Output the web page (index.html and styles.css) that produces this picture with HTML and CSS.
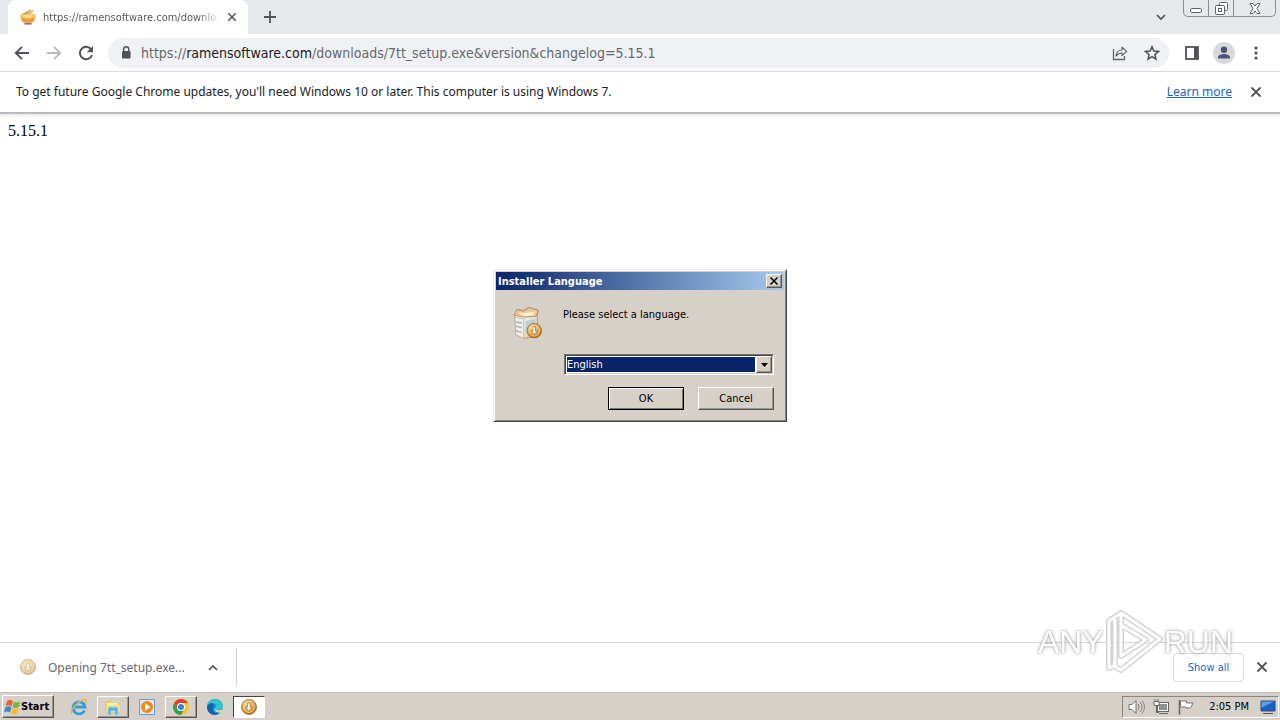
FILE: index.html
```html
<!DOCTYPE html>
<html lang="en">
<head>
<meta charset="utf-8">
<title>Installer Language</title>
<link rel="stylesheet" href="styles.css">
</head>
<body>
<svg class="defs" aria-hidden="true">
  <defs>
    <radialGradient id="gold" cx=".4" cy=".3" r=".8"><stop offset="0" stop-color="#ffe9b0"/><stop offset=".55" stop-color="#dca347"/><stop offset="1" stop-color="#a8691c"/></radialGradient>
    <linearGradient id="edge" x1="0" y1="0" x2="1" y2="1"><stop offset="0" stop-color="#0c59a4"/><stop offset=".6" stop-color="#1b9de2"/><stop offset="1" stop-color="#5bd36b"/></linearGradient>
    <linearGradient id="box" x1="0" y1="0" x2="1" y2="1"><stop offset="0" stop-color="#fff"/><stop offset=".5" stop-color="#e4e6e4"/><stop offset="1" stop-color="#e3b576"/></linearGradient>
    <symbol id="coin" viewBox="0 0 16 16"><circle cx="8" cy="8" r="7.5" fill="url(#gold)" stroke="#8a5a1a" stroke-width=".7"/><circle cx="8" cy="8" r="5.3" fill="none" stroke="#f6d793" stroke-width=".8"/><path d="M6.7 3.8h2.6v4.4h2L8 12.2 4.7 8.2h2z" fill="#fff" stroke="#98641f" stroke-width=".7"/></symbol>
    <symbol id="cross" viewBox="0 0 12 12"><path d="M1.5 1.5l9 9M10.5 1.5l-9 9" fill="none" stroke="currentColor" stroke-width="1.8"/></symbol>
  </defs>
</svg>
<div class="screen">
  <header class="tabs">
    <div class="tab">
      <svg class="i16" viewBox="0 0 16 16"><path d="M2 6L11 .8M4 6l9-4" stroke="#c88c55" stroke-width="1.1"/><ellipse cx="8" cy="7" rx="7.6" ry="2.8" fill="#f2a13b"/><path d="M.5 7h15c0 4-2 6-4 7.5h-7C2 13 .5 11 .5 7z" fill="#f5ac48"/><ellipse cx="8" cy="7" rx="6" ry="1.7" fill="#ffe08a"/><path d="M2 10.5q6 3 12 0" stroke="#e28a35" fill="none"/><path d="M4.5 14.8h7" stroke="#8a7090" stroke-width="1.6"/></svg>
      <span class="tab-title">https://ramensoftware.com/downloads</span>
      <button class="flat" aria-label="Close tab"><svg class="i10"><use href="#cross"/></svg></button>
    </div>
    <button class="flat new-tab" aria-label="New tab"><svg class="i12" viewBox="0 0 12 12"><path d="M6 0v12M0 6h12" stroke="#505357" stroke-width="1.8"/></svg></button>
    <div class="win-area">
      <button class="flat chevron" aria-label="Search tabs"><svg width="10" height="7" viewBox="0 0 10 7"><path d="M1 1l4 4 4-4" fill="none" stroke="#505357" stroke-width="1.7"/></svg></button>
      <div class="win">
        <button aria-label="Minimize"><svg width="12" height="12" viewBox="0 0 12 12"><rect x=".5" y="6.5" width="11" height="4" rx="1.2" fill="#fff" stroke="#5c6066"/></svg></button>
        <button aria-label="Restore"><svg width="13" height="13" viewBox="0 0 13 13"><rect x="4.5" y=".5" width="8" height="8" rx="1" fill="#fff" stroke="#5c6066"/><rect x=".5" y="3.5" width="9" height="9" rx="1" fill="#fff" stroke="#5c6066"/><rect x="3.5" y="6.5" width="3" height="3" fill="#fff" stroke="#5c6066"/></svg></button>
        <button class="win-close" aria-label="Close"><svg width="12" height="11" viewBox="0 0 12 11"><path d="M1 .5h3l2 2.6L8 .5h3L8 5.5l3 5H8L6 7.9l-2 2.6H1l3-5z" fill="#fff" stroke="#5c6066"/></svg></button>
      </div>
    </div>
  </header>
  <nav class="toolbar">
    <button class="flat" aria-label="Back"><svg class="i16" viewBox="0 0 16 16"><path d="M15 8H2M8 1.8L1.8 8 8 14.2" fill="none" stroke="#505357" stroke-width="1.9"/></svg></button>
    <button class="flat" aria-label="Forward"><svg class="i16" viewBox="0 0 16 16"><path d="M1 8h13M8 1.8L14.2 8 8 14.2" fill="none" stroke="#b8babd" stroke-width="1.9"/></svg></button>
    <button class="flat" aria-label="Reload"><svg class="i16" viewBox="0 0 16 16"><path d="M13.2 4.5A6.2 6.2 0 1 0 14 10" fill="none" stroke="#505357" stroke-width="2"/><path d="M15 1v6.2H8.8z" fill="#505357"/></svg></button>
    <div class="address">
      <svg width="10" height="13" viewBox="0 0 10 13"><rect x="1" y="5" width="8.6" height="7.5" rx="1" fill="#505357"/><path d="M2.7 5V3.2a2.5 2.5 0 0 1 5 0V5" fill="none" stroke="#505357" stroke-width="1.4"/></svg>
      <div class="url" role="textbox" aria-label="Address">https://<b>ramensoftware.com</b>/downloads/7tt_setup.exe&amp;version&amp;changelog=5.15.1</div>
      <button class="flat" aria-label="Share"><svg class="i16" viewBox="0 0 16 16"><path d="M1.5 4v10.5h11V11" fill="none" stroke="#62666b" stroke-width="1.3"/><path d="M4 11c.5-4 2.5-6 6-6V2.2l4.7 4.2L10 10.5V8C7 8 5.500 9 4 11z" fill="none" stroke="#62666b" stroke-width="1.2" stroke-linejoin="round"/></svg></button>
      <button class="flat" aria-label="Bookmark"><svg class="i16" viewBox="0 0 16 16"><path d="M8 1.800l1.800 4.300 4.700.4-3.600 3.100 1.100 4.600L8 11.700l-4 2.500 1.100-4.600-3.600-3.100 4.700-.4z" fill="none" stroke="#505357" stroke-width="1.5"/></svg></button>
    </div>
    <div class="tools">
      <button class="flat" aria-label="Side panel"><svg class="i14" viewBox="0 0 14 14"><rect x="1" y="1" width="12" height="12" fill="none" stroke="#505357" stroke-width="1.800"/><path d="M9 1h4v12H9z" fill="#505357"/></svg></button>
      <button class="flat" aria-label="Profile"><svg width="22" height="22" viewBox="0 0 22 22"><circle cx="11" cy="11" r="11" fill="#d6dade"/><circle cx="11" cy="7.800" r="3.200" fill="#485574"/><path d="M5 16.500v-1.300c0-2 3.800-3.100 6-3.100s6 1.100 6 3.100v1.300z" fill="#485574"/></svg></button>
      <button class="flat menu" aria-label="Menu"><svg width="4" height="14" viewBox="0 0 4 14"><g fill="#505357"><circle cx="2" cy="2" r="1.600"/><circle cx="2" cy="7" r="1.600"/><circle cx="2" cy="12" r="1.600"/></g></svg></button>
    </div>
  </nav>
  <div class="notice">
    <span>To get future Google Chrome updates, you'll need Windows 10 or later. This computer is using Windows 7.</span>
    <a href="#">Learn more</a>
    <button class="flat" aria-label="Dismiss"><svg class="i12"><use href="#cross"/></svg></button>
  </div>
  <main class="page">5.15.1</main>
  <div class="shelf">
    <button class="download"><svg class="i16 faded"><use href="#coin"/></svg><span>Opening 7tt_setup.exe...</span></button>
    <button class="flat more" aria-label="Download options"><svg width="10" height="7" viewBox="0 0 10 7"><path d="M1 6l4-4 4 4" fill="none" stroke="#505357" stroke-width="1.700"/></svg></button>
    <div class="rule"></div>
    <button class="show-all">Show all</button>
    <button class="flat" aria-label="Close downloads"><svg class="i12"><use href="#cross"/></svg></button>
  </div>
  <footer class="taskbar">
    <button class="start"><svg width="17" height="16" viewBox="0 0 17 16"><path d="M3 2q3-2 6 0L7.700 7.200q-3-2-6 0z" fill="#e9612c"/><path d="M10 2.500q3 2 6.500 0L15 8q-3 2-6.300 0z" fill="#76b83f"/><path d="M1.500 8.200q3-2 6 0L6 13.400q-3-2-6 0z" fill="#3d82d4"/><path d="M8.400 9q3 2 6.300 0l-1.500 5.300q-3 2-6.300 0z" fill="#f4bd2b"/></svg><span>Start</span></button>
    <div class="apps">
      <button class="app" aria-label="Internet Explorer"><svg class="i18" viewBox="0 0 18 18"><path d="M14.500 12.500A6 6 0 1 1 15 9H5" fill="none" stroke="#2f9fe0" stroke-width="2.800"/><path d="M2 16C-1 13 7 4 13 1.800c4-1.500 4 1 2.500 3.500" fill="none" stroke="#e7b936" stroke-width="1.300"/></svg></button>
      <button class="app raised" aria-label="Explorer"><svg class="i18" viewBox="0 0 18 18"><path d="M1 3h6l1 2h8v10H1z" fill="#ecc95e"/><path d="M3 5h11v4H3z" fill="#fff2b0"/><path d="M2 7h14v7H2z" fill="#f6df87"/><path d="M4 17v-6q0-2 2-2h6q2 0 2 2v6h-3v-4H7v4z" fill="#59afe0" stroke="#a8d9f1" stroke-width=".7"/></svg></button>
      <button class="app" aria-label="Media Player"><svg class="i18" viewBox="0 0 18 18"><path d="M1.500 1.500h15v15h-15z" fill="#d5e8f6" stroke="#6aa2cf"/><circle cx="9" cy="9" r="6" fill="#f28a1c"/><path d="M7 5.300v7.400L12.500 9z" fill="#fff"/></svg></button>
      <button class="app raised" aria-label="Chrome"><svg class="i18" viewBox="0 0 18 18"><circle cx="9" cy="9" r="8" fill="#f6c728"/><path d="M2.070 5A8 8 0 0 1 15.930 5H9a4 4 0 0 0-3.460 6z" fill="#df3d30"/><path d="M2.070 5A8 8 0 0 0 9 17l3.460-6a4 4 0 0 1-6.920 0z" fill="#31a04f"/><circle cx="9" cy="9" r="4" fill="#fff"/><circle cx="9" cy="9" r="3" fill="#3f7de0"/></svg></button>
      <button class="app" aria-label="Edge"><svg class="i18" viewBox="0 0 18 18"><circle cx="9" cy="9" r="8" fill="url(#edge)"/><path d="M1 9C2 4 8 4 10 7c1 2-1 3 0 4 2 1 7 0 7-3 0 0-1-7-8-7S1 7 1 9z" fill="#35c3d0"/><path d="M2 7c4-3 7 0 5 3-1 4 3 6 7 4-3 4-9 4-12-1-1-2-1-4 0-6z" fill="#1361b1"/><path d="M10 8q-2 2 0 3.500 3 1.500 6.500 0L18 15l-3-.5c-5 1-8-3-5-6.500z" fill="#d6d2ca"/></svg></button>
      <button class="app pressed" aria-label="Installer"><svg class="i16"><use href="#coin"/></svg></button>
    </div>
    <div class="tray">
      <svg width="17" height="16" viewBox="0 0 17 16"><path d="M1 5.500h3l4-4v13l-4-4H1z" fill="#fff" stroke="#707070"/><path d="M10 5q2 3 0 6M12 3q4 5 0 10M14 1.500q5 6.500 0 13" fill="none" stroke="#858585"/></svg>
      <svg width="17" height="16" viewBox="0 0 17 16"><rect x="4.500" y="3.500" width="11" height="9" fill="#f7f7f7" stroke="#666"/><path d="M6 5h8v6H6z" fill="#8f8f8f"/><path d="M6 14.500h9M3.500 7v6.500H6" fill="none" stroke="#666"/><path d="M1 2.500h5v4H1zM2 0v2.500M5 0v2.500" fill="#fff" stroke="#666"/></svg>
      <svg width="16" height="16" viewBox="0 0 16 16"><path d="M1.500 1v14.500" stroke="#666" stroke-width="1.500"/><path d="M2.500 2h6v2h6.500l-2.500 5H8V8H2.500z" fill="#fff" stroke="#777"/></svg>
      <time>2:05 PM</time>
      <svg class="i16" viewBox="0 0 16 16"><path d="M1 2h14v10H1z" fill="#1b60be"/><path d="M1 2h14L1 9z" fill="#58a0e5"/><path d="M1 2h14v10H1z" fill="none" stroke="#254e87"/><path d="M3 14.500h10" stroke="#495463"/></svg>
    </div>
  </footer>

  <section class="dialog" role="dialog" aria-labelledby="dlg-title">
    <div class="caption"><h1 id="dlg-title">Installer Language</h1><button class="classic close" aria-label="Close dialog"><svg width="8" height="8" viewBox="0 0 8 8"><path d="M.5.500l7 7M7.500.500l-7 7" stroke="#000" stroke-width="1.500"/></svg></button></div>
    <div class="dialog-body">
      <svg class="installer" viewBox="0 0 32 34"><path d="M3 10l2-7 7 1 5-3 10 3-1 6 1 20-14 3-9-4z" fill="url(#box)" stroke="#ad8b64" stroke-width=".8"/><path d="M2 9l3-6 7 2 6-4 9 3-2 6-13 1z" fill="#edc791" stroke="#a97845" stroke-width=".7"/><path d="M6 6l7 1 11-2-2 4-10 1z" fill="#fff1d6"/><path d="M3 11l9 2v20l-8-4z" fill="#f0eee8" stroke="#b5a58c" stroke-width=".6"/><path d="M14 15l10-2v11l-10 3z" fill="#a8c8d5" opacity=".7"/><path d="M4 16l6 1M4 20l6 2M4 25l6 2" stroke="#a9b0b5" stroke-width="1.400"/><use href="#coin" x="15" y="17" width="16" height="16"/></svg>
      <form class="fields">
        <label for="language">Please select a language.</label>
        <div class="combo"><select id="language"><option>English</option></select><span class="classic drop"><svg width="7" height="4" viewBox="0 0 7 4"><path d="M0 0h7L3.500 4z"/></svg></span></div>
        <div class="actions"><button type="button" class="classic action default">OK</button><button type="button" class="classic action">Cancel</button></div>
      </form>
    </div>
  </section>

  <div class="watermark"><span>ANY</span><svg width="58" height="64" viewBox="0 0 58 64"><path d="M16 3L55 29 16 60 9 56 4 58V11l12-8v43l25-16-25-15M10 9v47" fill="none" stroke="#ccc" stroke-width="6" stroke-linejoin="round"/><path d="M16 3L55 29 16 60 9 56 4 58V11l12-8v43l25-16-25-15M10 9v47" fill="none" stroke="#fff" stroke-width="3" stroke-linejoin="round"/></svg><span>RUN</span></div>
</div>
</body>
</html>
```

FILE: styles.css
```css
* { box-sizing: border-box; }
body { margin: 0; font-family: "DejaVu Sans Condensed", "DejaVu Sans", sans-serif; font-size: 11px; color: #202124; }
button { font: inherit; color: inherit; padding: 0; border: 0; background: none; }
svg { display: block; flex: none; }
.defs { position: absolute; width: 0; height: 0; }
.i10 { width: 10px; height: 10px; }
.i12 { width: 12px; height: 12px; }
.i14 { width: 14px; height: 14px; }
.i16 { width: 16px; height: 16px; }
.i18 { width: 18px; height: 18px; }
.flat { display: flex; align-items: center; justify-content: center; flex: none; color: #505357; }
.screen { position: relative; min-height: 100vh; display: flex; flex-direction: column; background: #fff; overflow: hidden; }

.tabs { display: flex; height: 34px; background: #e6e9ec; padding-left: 8px; }
.tab { width: 240px; display: flex; align-items: center; gap: 7px; padding: 0 11px 0 12px; background: #fff; border-radius: 8px 8px 0 0; }
.tab-title { flex: 1; min-width: 0; overflow: hidden; white-space: nowrap; color: #55585c; -webkit-mask-image: linear-gradient(to right, #000 88%, transparent); mask-image: linear-gradient(to right, #000 88%, transparent); }
.new-tab { padding: 0 16px; }
.win-area { margin-left: auto; display: flex; gap: 17px; align-items: flex-start; padding-right: 4px; }
.chevron { height: 34px; }
.win { display: flex; height: 17px; border: 1px solid #8b9096; border-top: 0; border-radius: 0 0 5px 5px; }
.win button { width: 25px; display: flex; align-items: center; justify-content: center; border-right: 1px solid #8b9096; }
.win .win-close { width: 41px; border: 0; }

.toolbar { display: flex; align-items: center; height: 38px; gap: 16px; padding: 0 17px 0 14px; border-bottom: 1px solid #d9dadc; }
.tools { display: flex; align-items: center; gap: 14px; }
.menu { width: 14px; }
.address { flex: 1; min-width: 0; height: 30px; margin-left: -2px; display: flex; align-items: center; gap: 16px; padding: 0 9px 0 13px; border-radius: 15px; background: #f0f1f4; }
.url { flex: 1; min-width: 0; white-space: nowrap; overflow: hidden; margin-left: -6px; font-size: 14px; color: #65696e; }
.url b { font-weight: 400; color: #202124; }

.notice { display: flex; align-items: center; height: 42px; padding: 0 18px 1px 16px; font-family: "Noto Sans", "Open Sans", sans-serif; font-size: 12px; border-bottom: 2px solid #b9b9b9; box-shadow: 0 2px 2px #eee; }
.notice a { margin-left: auto; margin-right: 18px; color: #2361c5; }
.page { flex: 1; padding: 8px; font: 16px/18px "Liberation Serif", serif; color: #000; }

.shelf { display: flex; align-items: center; height: 51px; border-top: 1px solid #d5d5d5; padding: 0 12px 2px 20px; }
.download { display: flex; align-items: center; gap: 12px; width: 168px; font-family: "Noto Sans", "Open Sans", sans-serif; font-size: 12px; color: #66696d; }
.faded { opacity: .55; }
.more { margin-left: 20px; }
.rule { width: 1px; height: 38px; margin-left: 18px; background: #d0d0d0; }
.show-all { margin-left: auto; margin-right: 12px; width: 71px; height: 29px; border: 1px solid #dadce0; border-radius: 4px; color: #1d64c8; }

.taskbar { display: flex; align-items: center; height: 27px; background: #d6d0c8; box-shadow: 0 -1px #c2bfba; }
.classic, .raised, .start { background: #d6d0c8; border: 1px solid; border-color: #fff #555 #555 #fff; box-shadow: inset -1px -1px #99958f; }
.start { margin-left: 2px; width: 52px; height: 23px; display: flex; align-items: center; padding-left: 1px; font-size: 11px; font-weight: 700; color: #000; }
.apps { display: flex; align-items: center; gap: 2px; margin-left: 9px; }
.app { width: 32px; height: 22px; display: flex; align-items: center; justify-content: center; }
.pressed { background: #fff; border: 1px solid; border-color: #444 #fff #fff #444; }
.tray { margin-left: auto; margin-right: 1px; height: 22px; display: flex; align-items: center; gap: 8px; padding: 0 2px 0 5px; border: 1px solid; border-color: #88847e #fff #fff #88847e; color: #000; }
.tray time { margin: 0 3px 0 7px; }

.dialog { position: absolute; left: 50%; top: 269px; width: 294px; transform: translateX(-50%); padding: 2px 1px 11px 2px; background: #d6d0c8; border: 1px solid; border-color: #eee #444 #444 #eee; box-shadow: inset 1px 1px #fff, inset -1px -1px #88847e; color: #000; }
.caption { display: flex; align-items: center; height: 18px; padding: 0 2px; margin-right: 1px; background: linear-gradient(to right, #0a246a, #a6caf0); }
.caption h1 { flex: 1; margin: 0; font-size: 11px; color: #fff; }
.close { width: 16px; height: 14px; display: flex; align-items: center; justify-content: center; }
.dialog-body { display: flex; gap: 20px; padding: 16px 11px 0 16px; }
.installer { width: 31px; height: 34px; }
.fields { flex: 1; display: flex; flex-direction: column; }
.fields label { line-height: 17px; }
.combo { display: flex; height: 21px; margin-top: 31px; margin-left: 1px; padding: 1px; background: #fff; border: 1px solid; border-color: #77736e #fff #fff #77736e; box-shadow: inset 1px 1px #444, inset -1px -1px #d6d0c8; }
.combo select { flex: 1; min-width: 0; appearance: none; font: inherit; color: #fff; background: #0a246a; border: 1px solid #fff; border-radius: 0; padding: 0; outline: 0; }
.drop { width: 16px; display: flex; align-items: center; justify-content: center; }
.actions { display: flex; justify-content: flex-end; gap: 14px; margin-top: 12px; }
.action { width: 76px; height: 23px; }
.default { border-color: #000; box-shadow: inset 1px 1px #fff, inset -1px -1px #77736e; }

.watermark { position: absolute; right: 47px; bottom: 46px; display: flex; align-items: center; gap: 1px; font-family: "Liberation Sans", sans-serif; font-size: 32px; color: #fff; text-shadow: 0 0 2px #888, 0 0 4px #aaa; opacity: .85; pointer-events: none; }
```
